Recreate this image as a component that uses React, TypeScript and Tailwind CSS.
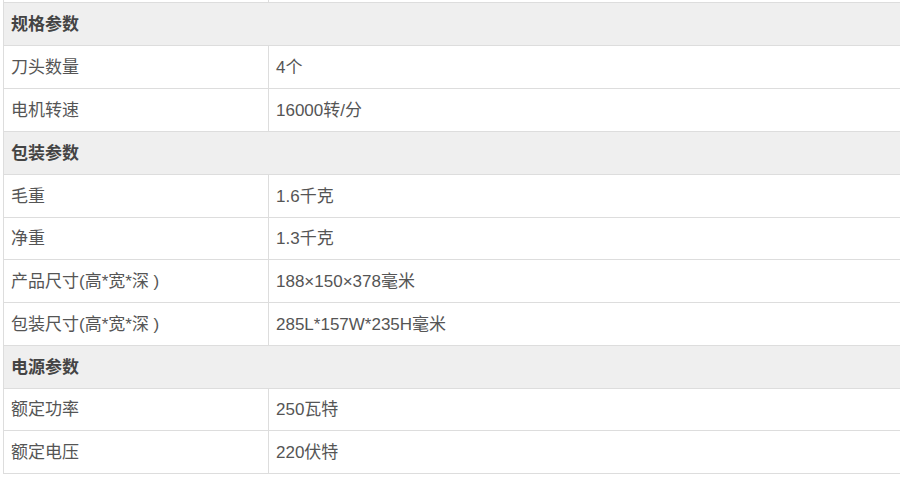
import React from "react";

type Row = { kind: "h"; label: string; h: string } | { kind: "r"; label: string; value: string; h: string };

const rows: Row[] = [
  { kind: "h", label: "规格参数", h: "h-[43px]" },
  { kind: "r", label: "刀头数量", value: "4个", h: "h-[43px]" },
  { kind: "r", label: "电机转速", value: "16000转/分", h: "h-[43px]" },
  { kind: "h", label: "包装参数", h: "h-[43px]" },
  { kind: "r", label: "毛重", value: "1.6千克", h: "h-[43px]" },
  { kind: "r", label: "净重", value: "1.3千克", h: "h-[42px]" },
  { kind: "r", label: "产品尺寸(高*宽*深 )", value: "188×150×378毫米", h: "h-[43px]" },
  { kind: "r", label: "包装尺寸(高*宽*深 )", value: "285L*157W*235H毫米", h: "h-[43px]" },
  { kind: "h", label: "电源参数", h: "h-[43px]" },
  { kind: "r", label: "额定功率", value: "250瓦特", h: "h-[42px]" },
  { kind: "r", label: "额定电压", value: "220伏特", h: "h-[43px]" },
];

export default function App() {
  return (
    <div
      className="w-[900px] h-[478px] bg-white overflow-hidden text-[17px] leading-none"
      style={{ fontFamily: '"Liberation Sans", Arial, "Noto Sans CJK SC", sans-serif' }}
    >
      <div className="ml-[3px] border-l border-[#dddddd]">
        <div className="flex h-[3px] border-b border-[#dddddd]">
          <div className="w-[265px] border-r border-[#dddddd]" />
          <div className="flex-1" />
        </div>
        {rows.map((r, i) =>
          r.kind === "h" ? (
            <div
              key={i}
              className={`flex items-center ${r.h} border-b border-[#dddddd] bg-[#efefef] pl-[7px] font-bold text-[#444444]`}
            >
              {r.label}
            </div>
          ) : (
            <div key={i} className={`flex ${r.h} border-b border-[#dddddd] text-[#555555]`}>
              <div className="flex w-[265px] items-center border-r border-[#dddddd] pl-[7px]">{r.label}</div>
              <div className="flex flex-1 items-center pl-[7px]">{r.value}</div>
            </div>
          )
        )}
      </div>
    </div>
  );
}
